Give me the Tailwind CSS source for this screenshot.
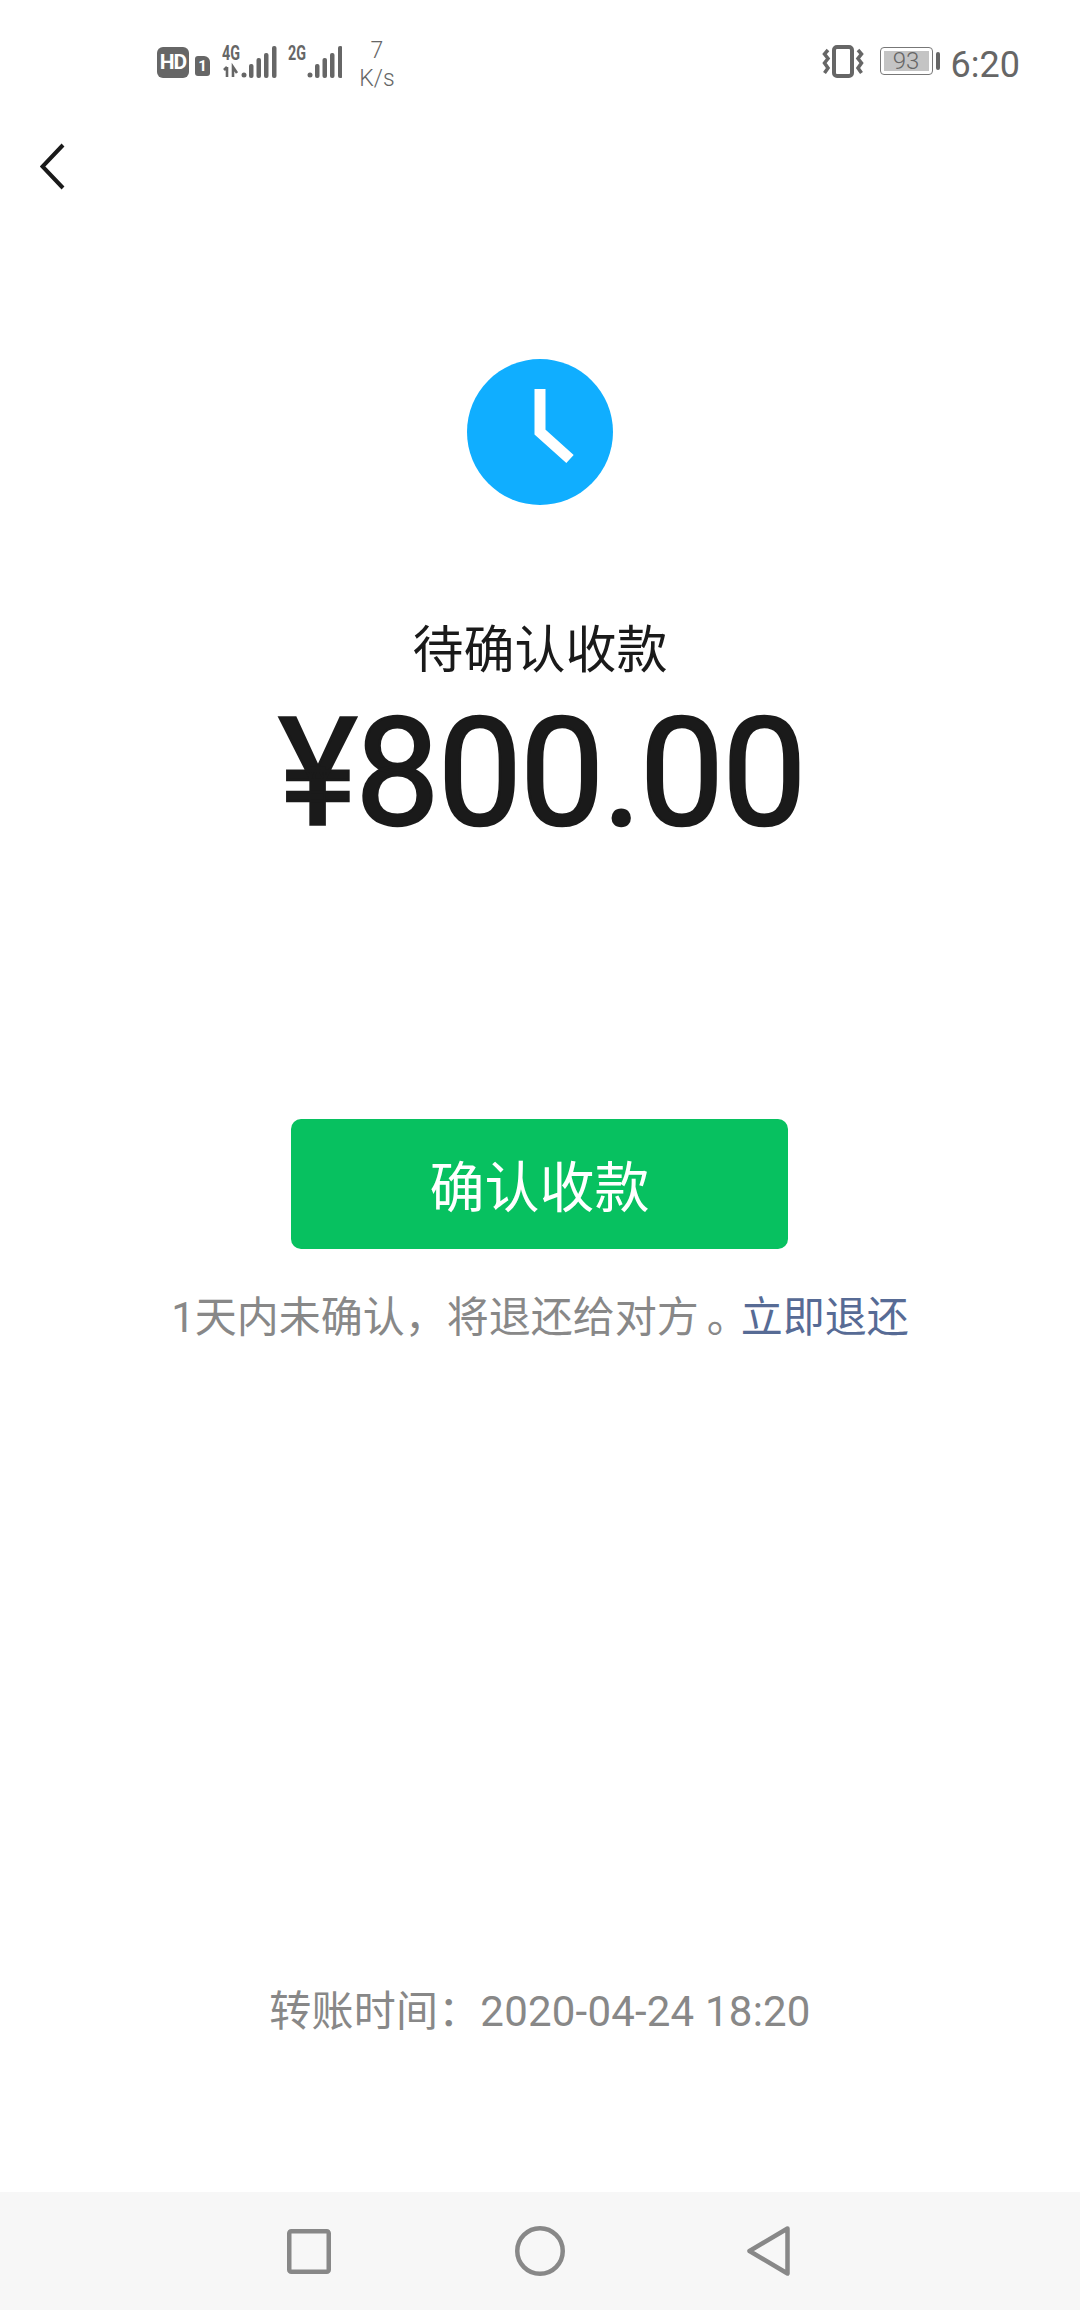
<!DOCTYPE html>
<html lang="zh-CN">
<head>
  <meta charset="UTF-8">
  <meta name="viewport" content="width=device-width, initial-scale=1.0">
  <title>待确认收款</title>
  <script src="https://cdn.jsdelivr.net/npm/@tailwindcss/browser@4"></script>
</head>
<body class="bg-white font-['Roboto','Noto_Sans_CJK_SC',sans-serif] antialiased">
  <div class="flex flex-col w-[1080px] h-[2310px] bg-white">

    <!-- Status bar -->
    <div class="flex items-start justify-between h-[100px] pl-[157px] pr-[60px] pt-[36px] text-[#666666]">
      <div class="flex items-start">
        <div class="flex items-center justify-center w-[32px] h-[31px] mt-[11px] rounded-[6px] bg-[#666666] text-white text-[21px] font-bold leading-none tracking-[-1px]">HD</div>
        <div class="flex items-center justify-center w-[15px] h-[20px] mt-[20px] ml-[6px] rounded-[3px] rounded-tr-[6px] bg-[#666666] text-white text-[15px] font-bold leading-none">1</div>
        <svg class="ml-[12px] mt-[2px]" width="56" height="42" viewBox="0 -6 56 42" fill="#666666">
          <text x="0" y="16" font-family="Roboto" font-size="20" font-weight="700" textLength="18" lengthAdjust="spacingAndGlyphs">4G</text>
          <path d="M5 23 V33 M2 26 L5 23 M11 33 V23 L15 29" fill="none" stroke="#666666" stroke-width="2.6"/>
          <circle cx="22" cy="31" r="2.5"/>
          <rect x="27" y="20" width="4.5" height="14" rx="2"/>
          <rect x="34.5" y="14" width="4.5" height="20" rx="2"/>
          <rect x="42" y="9" width="4.5" height="25" rx="2"/>
          <rect x="50" y="2" width="4.5" height="32" rx="2"/>
        </svg>
        <svg class="ml-[10px] mt-[2px]" width="54" height="42" viewBox="0 -6 54 42" fill="#666666">
          <text x="0" y="16" font-family="Roboto" font-size="20" font-weight="700" textLength="18" lengthAdjust="spacingAndGlyphs">2G</text>
          <circle cx="22" cy="31" r="2.5"/>
          <rect x="27" y="20" width="4.5" height="14" rx="2"/>
          <rect x="34.5" y="14" width="4.5" height="20" rx="2"/>
          <rect x="42" y="9" width="4.5" height="25" rx="2"/>
          <rect x="50" y="2" width="4.5" height="32" rx="2"/>
        </svg>
        <div class="flex flex-col items-center w-[40px] ml-[15px] mt-[1px] text-[23px] leading-[28px] font-light">
          <span>7</span>
          <span>K/s</span>
        </div>
      </div>
      <div class="flex items-start">
        <svg class="mt-[8px]" width="44" height="34" viewBox="0 0 44 34" fill="none" stroke="#666666">
          <rect x="12" y="3" width="18" height="29" rx="3" stroke-width="4"/>
          <path d="M6 6 L2.5 10 L6 14.5 L2.5 19 L6 24 L2.5 29" stroke-width="3.5"/>
          <path d="M36 6 L39.5 10 L36 14.5 L39.5 19 L36 24 L39.5 29" stroke-width="3.5"/>
        </svg>
        <div class="flex items-center ml-[14px] mt-[11px]">
          <div class="flex items-center justify-center w-[53px] h-[28px] p-[3px] rounded-[4px] border-[1.5px] border-[#777777]">
            <div class="flex items-center justify-center w-full h-full bg-[#c4c4c4] text-[24px] leading-none font-light">93</div>
          </div>
          <div class="w-[4px] h-[18px] ml-[3px] rounded-[2px] bg-[#666666]"></div>
        </div>
        <div class="ml-[11px] mt-[9px] text-[36px] leading-[40px]">6:20</div>
      </div>
    </div>

    <!-- Back -->
    <div class="h-[100px] pl-[40px] pt-[43px]">
      <svg width="26" height="47" viewBox="0 0 26 47" fill="none" stroke="#1a1a1a" stroke-width="4">
        <path d="M23 2 L2.5 23.5 L23 45"/>
      </svg>
    </div>

    <!-- Content -->
    <div class="flex flex-col items-center flex-1">
      <div class="flex items-center justify-center w-[146px] h-[146px] mt-[159px] rounded-full bg-[#10aeff]">
        <svg width="146" height="146" viewBox="0 0 146 146" fill="none" stroke="#ffffff" stroke-width="11">
          <path d="M73 30 L73 73 L103 100"/>
        </svg>
      </div>
      <div class="mt-[116px] text-[51px] leading-[60px] text-[#1a1a1a]">待确认收款</div>
      <div class="mt-[13px] ml-[3px] text-[150px] leading-[160px] font-normal [-webkit-text-stroke:2.5px_#1a1a1a] text-[#1a1a1a] tracking-[-2px]">¥800.00</div>
      <button class="flex items-center justify-center w-[497px] h-[130px] mt-[265px] -ml-[1px] pt-[8px] rounded-[10px] bg-[#07c160] text-white text-[55px] leading-none">确认收款</button>
      <div class="mt-[44px] text-[42px] leading-[50px] text-[#888888] whitespace-nowrap">1天内未确认，将退还给对<span class="tracking-[8px]">方</span><span class="tracking-[-8px]">。</span><span class="text-[#576b95]">立即退还</span></div>
      <div class="mt-[644px] text-[42px] leading-[50px] text-[#888888] tracking-[0.2px]">转账时间：2020-04-24 18:20</div>
    </div>

    <!-- Navigation bar -->
    <div class="flex items-center h-[118px] pl-[287px] bg-[#f7f7f7]">
      <svg width="44" height="45" viewBox="0 0 44 45" fill="none" stroke="#888888" stroke-width="4.5" stroke-linejoin="round">
        <rect x="2.25" y="2.25" width="39.5" height="40.5" rx="2"/>
      </svg>
      <svg class="ml-[184px]" width="50" height="50" viewBox="0 0 50 50" fill="none" stroke="#888888" stroke-width="4.5">
        <circle cx="25" cy="25" r="22.75"/>
      </svg>
      <svg class="ml-[182px]" width="43" height="50" viewBox="0 0 43 50" fill="none" stroke="#888888" stroke-width="4.5" stroke-linejoin="round">
        <path d="M40.5 2.5 L2.5 25 L40.5 47.5 Z"/>
      </svg>
    </div>
  </div>
</body>
</html>
